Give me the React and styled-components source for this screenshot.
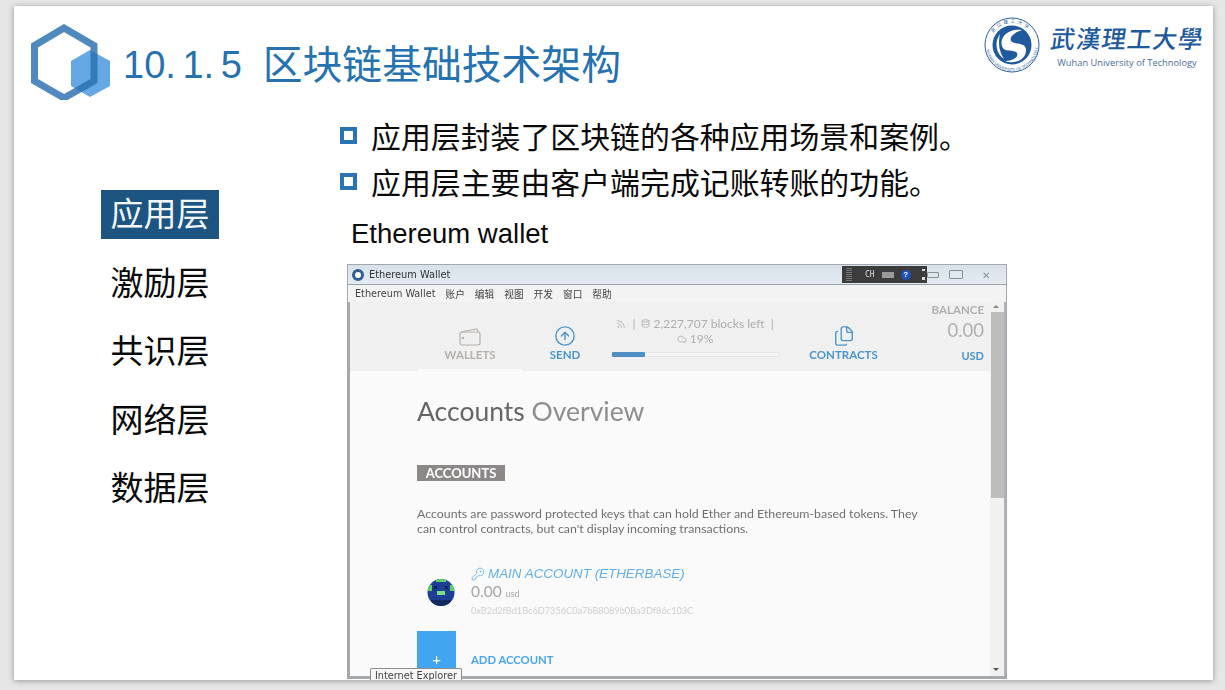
import React from 'react';
import styled, { createGlobalStyle } from 'styled-components';
import { CircleArrowUp, Cloud, Database, Files, KeyRound, Rss } from 'lucide-react';

const GlobalStyle = createGlobalStyle`
  html, body {
    margin: 0;
    padding: 0;
    height: 100%;
    background: #e6e6e6;
    overflow: hidden;
    font-family: "Liberation Sans", "Noto Sans CJK SC", sans-serif;
  }
`;

const Slide = styled.div`
  width: 1199px;
  height: 674px;
  margin: 6px 0 0 14px;
  background: #fff;
  box-shadow: 0 1px 6px rgba(0, 0, 0, 0.35);
  overflow: hidden;
`;

const Header = styled.header`
  height: 100px;
  box-sizing: border-box;
  padding: 18px 10px 0 17px;
  display: flex;
  align-items: flex-start;
`;

const Title = styled.h1`
  margin: 19px 0 0 12px;
  font-size: 38px;
  line-height: 44px;
  font-weight: 400;
  color: #2672b0;
  display: flex;
  flex: 1;
`;

const TitleNumber = styled.span`
  word-spacing: -4px;
  margin-right: 21px;
`;

const TitleText = styled.span`
  font-size: 39.8px;
`;

const Brand = styled.div`
  display: flex;
  align-items: flex-start;
  gap: 11px;
  margin-top: -7px;
`;

const BrandText = styled.div`
  display: flex;
  flex-direction: column;
  align-items: center;
  width: 152px;
`;

const BrandName = styled.div`
  font-family: "Noto Sans CJK TC", sans-serif;
  font-weight: 500;
  font-size: 24.5px;
  line-height: 30px;
  letter-spacing: 1px;
  color: #1f5a9e;
  white-space: nowrap;
  margin-top: 6px;
  transform: skewX(-8deg);
`;

const BrandEnglish = styled.div`
  font-family: "Open Sans", sans-serif;
  font-size: 9.3px;
  line-height: 14px;
  color: #4a6d9c;
  margin-top: 3px;
  white-space: nowrap;
`;

const Body = styled.main`
  display: flex;
`;

const LayerList = styled.ul`
  list-style: none;
  margin: 84px 0 0 87px;
  padding: 0;
  width: 118px;
  display: flex;
  flex-direction: column;
  gap: 19.5px;
`;

const Layer = styled.li`
  height: 49px;
  line-height: 49px;
  text-align: center;
  font-size: 33px;
  color: ${(p) => (p.$active ? '#f4f7fa' : '#0a0a0a')};
  background: ${(p) => (p.$active ? '#1c5482' : 'transparent')};
`;

const Content = styled.section`
  margin-left: 121px;
  padding-top: 6px;
`;

const Bullet = styled.div`
  display: flex;
  align-items: center;
  height: 46px;
  font-size: 29.9px;
  color: #0a0a0a;
  white-space: nowrap;
`;

const BulletMark = styled.span`
  width: 9px;
  height: 9px;
  border: 4px solid #2a74b3;
  margin-right: 14px;
  flex: none;
`;

const Caption = styled.div`
  margin: 13px 0 0 11px;
  font-size: 27.5px;
  line-height: 34px;
  color: #0a0a0a;
`;

const Win = styled.div`
  position: relative;
  margin: 13px 0 0 7px;
  width: 660px;
  height: 415px;
  box-sizing: border-box;
  background: #fafafa;
  border: 1px solid #a4a8ad;
  filter: blur(0.35px);
  font-family: Lato, "Noto Sans CJK SC", sans-serif;
`;

const TitleBar = styled.div`
  height: 20px;
  box-sizing: border-box;
  display: flex;
  align-items: center;
  gap: 5px;
  padding-left: 4px;
  background: linear-gradient(#d8e1ea, #e4ebf2);
  border-bottom: 1px solid #98a0a8;
  font-family: "DejaVu Sans", sans-serif;
  font-size: 9.8px;
  color: #333;
`;

const AppIcon = styled.span`
  width: 6px;
  height: 6px;
  border: 3px solid #2f5f8f;
  border-radius: 50%;
  background: #fff;
`;

const WindowButtons = styled.div`
  position: absolute;
  top: 1px;
  right: 16px;
  display: flex;
  align-items: center;
  gap: 10px;
  height: 17px;
  color: #8a8f96;
  font-size: 10px;
`;

const WindowMin = styled.span`
  width: 10px;
  height: 4px;
  border: 1px solid #8a8f96;
  border-radius: 1px;
`;

const WindowMax = styled.span`
  width: 12px;
  height: 7px;
  margin-right: 9px;
  border: 1px solid #8a8f96;
  border-radius: 1px;
`;

const ImeBar = styled.div`
  position: absolute;
  top: 1px;
  left: 494px;
  width: 85px;
  height: 17px;
  box-sizing: border-box;
  padding-left: 4px;
  display: flex;
  align-items: center;
  gap: 7px;
  background: #3c3c3c;
  color: #ddd;
  font-family: "DejaVu Sans Mono", monospace;
  font-size: 8px;
`;

const ImeGrip = styled.span`
  width: 6px;
  height: 13px;
  margin-right: 6px;
  background: repeating-linear-gradient(#777 0 1px, #3c3c3c 1px 2px);
`;

const ImeKeyboard = styled.span`
  width: 12px;
  height: 6px;
  background: #9a9a9a;
`;

const ImeHelp = styled.span`
  width: 10px;
  height: 10px;
  border-radius: 50%;
  background: #1f4fb8;
  color: #fff;
  font-size: 8px;
  line-height: 10px;
  text-align: center;
  font-family: "Liberation Sans", sans-serif;
  font-weight: 700;
`;

const ImeMore = styled.span`
  margin-left: 4px;
  width: 3px;
  height: 11px;
  background: linear-gradient(#ddd 0 2px, transparent 2px 8px, #ddd 8px);
`;

const MenuBar = styled.nav`
  height: 17px;
  display: flex;
  align-items: center;
  gap: 10px;
  padding-left: 7px;
  background: #f3f3f3;
  font-family: "DejaVu Sans", "Noto Sans CJK SC", sans-serif;
  font-size: 9.7px;
  color: #444;
`;

const Frame = styled.div`
  display: flex;
  height: 376px;
  box-sizing: border-box;
  overflow: hidden;
  border-left: 2px solid #a8abae;
  border-bottom: 2px solid #a8abae;
`;

const Main = styled.div`
  flex: 1;
  min-width: 0;
`;

const TopNav = styled.div`
  height: 69px;
  background: #f0f0f0;
  display: grid;
  grid-template-columns: 94px 52px 53px 32px 229px 67px 1fr;
  position: relative;
`;

const NavSpacer = styled.div``;

const NavItem = styled.div`
  display: flex;
  flex-direction: column;
  align-items: center;
  justify-content: flex-end;
  gap: 1px;
  padding-bottom: 10px;
  font-size: 11.5px;
  font-weight: 700;
  line-height: 13px;
  white-space: nowrap;
  color: ${(p) => (p.$muted ? '#b5b0ac' : '#4a95cc')};
`;

const SyncStatus = styled.div`
  position: absolute;
  left: 261px;
  top: 14px;
  width: 168px;
  display: flex;
  flex-direction: column;
  align-items: center;
  font-size: 12px;
  color: #aeaeae;
`;

const SyncLine = styled.div`
  height: 15px;
  display: flex;
  align-items: center;
  gap: 3px;
  white-space: nowrap;
`;

const Progress = styled.div`
  width: 168px;
  height: 5px;
  margin-top: 6px;
  background: #f6f6f6;
  border: 1px solid #e6e6e6;
  box-sizing: border-box;
`;

const ProgressFill = styled.div`
  height: 5px;
  margin-top: -1px;
  background: #4f8fc4;
  border-radius: 1px;
`;

const Balance = styled.div`
  position: absolute;
  right: 6px;
  top: 1px;
  display: flex;
  flex-direction: column;
  align-items: flex-end;
  color: #b0b0b0;
`;

const BalanceLabel = styled.div`
  font-size: 11.5px;
  line-height: 13px;
  font-weight: 700;
`;

const BalanceValue = styled.div`
  font-size: 18.5px;
  line-height: 28px;
`;

const BalanceUnit = styled.div`
  font-size: 11px;
  font-weight: 700;
  line-height: 14px;
  margin-top: 5px;
  color: #4a95cc;
`;

const Tab = styled.div`
  position: absolute;
  left: 68px;
  bottom: 0;
  width: 104px;
  height: 2px;
  background: #fafafa;
`;

const Page = styled.div`
  padding: 26px 0 0 67px;
`;

const PageTitle = styled.h2`
  margin: 0;
  font-size: 26.5px;
  line-height: 28px;
  font-weight: 400;
  color: #8e8e8e;
`;

const PageTitleStrong = styled.span`
  color: #666;
`;

const SectionTag = styled.div`
  display: inline-block;
  margin-top: 40px;
  width: 88px;
  height: 16px;
  line-height: 16px;
  text-align: center;
  background: #8c8888;
  color: #fff;
  font-size: 13px;
  font-weight: 700;
`;

const Intro = styled.p`
  margin: 25px 0 0;
  width: 510px;
  font-size: 12.35px;
  line-height: 15px;
  color: #6f6f6f;
`;

const Account = styled.div`
  display: flex;
  margin-top: 30px;
`;

const AccountAvatar = styled.div`
  width: 54px;
  display: flex;
  align-items: center;
  padding-left: 10px;
  box-sizing: border-box;
`;

const AccountInfo = styled.div``;

const AccountName = styled.div`
  display: flex;
  align-items: center;
  gap: 3px;
  font-family: "Liberation Sans", sans-serif;
  font-style: italic;
  font-size: 13.4px;
  line-height: 16px;
  color: #62b0ea;
`;

const AccountAmount = styled.div`
  font-size: 15.5px;
  line-height: 19px;
  color: #a5a5a5;
`;

const AccountUnit = styled.span`
  font-size: 9px;
  margin-left: 4px;
`;

const AccountAddress = styled.div`
  font-size: 9.2px;
  line-height: 14px;
  margin-top: 1px;
  color: #cfcfcf;
`;

const AddRow = styled.div`
  display: flex;
  align-items: center;
  gap: 15px;
  margin-top: 13px;
`;

const AddButton = styled.div`
  width: 39px;
  height: 56px;
  background: #42a5f0;
  color: #fff;
  font-size: 15px;
  line-height: 56px;
  text-align: center;
`;

const AddLabel = styled.div`
  font-size: 11.3px;
  font-weight: 700;
  color: #4aa6ec;
`;

const Scrollbar = styled.div`
  width: 14px;
  background: #f1f1f1;
  position: relative;
  flex: none;
  border-right: 2px solid #b0b2b5;
`;

const ScrollThumb = styled.div`
  position: absolute;
  top: 10px;
  left: 1px;
  right: 0;
  height: 186px;
  background: #bdbdbd;
`;

const ScrollArrow = styled.span`
  position: absolute;
  left: 3px;
  width: 0;
  height: 0;
  border-left: 3px solid transparent;
  border-right: 3px solid transparent;
  ${(p) => (p.$down ? 'bottom: 5px; border-top: 3px solid #555;' : 'top: 3px; border-bottom: 3px solid #888;')}
`;

const Tooltip = styled.div`
  position: absolute;
  left: 22px;
  top: 403px;
  width: 92px;
  height: 13px;
  box-sizing: border-box;
  padding-left: 4px;
  background: #f7f7f7;
  border: 1px solid #8c8c8c;
  border-bottom: none;
  border-radius: 2px 2px 0 0;
  font-family: "DejaVu Sans", sans-serif;
  font-size: 9.7px;
  line-height: 13px;
  white-space: nowrap;
  color: #444;
`;

const LogoMark = () => (
  <svg width="80" height="76" viewBox="0 0 80 76" style={{ flex: 'none' }}>
    <polygon points="59,26 79,37 79,62 59,73 40,62 40,37" fill="#65a8e3" />
    <polygon points="33,4 63,21.5 63,57 33,74 3.5,57 3.5,21.5" fill="none" stroke="#2a6fae" strokeOpacity="0.82" strokeWidth="7" />
  </svg>
);

const Seal = () => (
  <svg width="56" height="56" viewBox="0 0 56 56" style={{ flex: 'none' }}>
    <defs>
      <path id="sealTop" d="M6 28 A22 22 0 0 1 50 28" />
      <path id="sealBottom" d="M2 28 A26 26 0 0 0 54 28" />
    </defs>
    <circle cx="28" cy="28" r="27" fill="#fff" stroke="#2a5f9e" strokeWidth="1" />
    <circle cx="28" cy="28" r="19.5" fill="#1f5a9e" />
    <path d="M38 13 C26 11 15 19 18 29 C20 36 30 32 33 36 C35 40 29 44 21 44 C31 48 43 42 42 32 C41 25 30 28 27 24 C25 20 31 15 38 13 Z" fill="#fff" />
    <path d="M16 17 C10 25 12 37 20 42 C15 34 14 26 16 17 Z" fill="#fff" />
    <text fontSize="4.6" fill="#2a5f9e" fontFamily="Noto Sans CJK SC, sans-serif" letterSpacing="2.2">
      <textPath href="#sealTop" startOffset="18%">武汉理工大学</textPath>
    </text>
    <text fontSize="3.9" fill="#2a5f9e" fontFamily="Liberation Sans, sans-serif">
      <textPath href="#sealBottom" startOffset="6%">WUHAN UNIVERSITY OF TECHNOLOGY</textPath>
    </text>
  </svg>
);

const WalletIcon = () => (
  <svg width="24" height="20" viewBox="0 0 24 20" fill="none" stroke="currentColor" strokeWidth="1.2">
    <path d="M3 5 L18 2 C19 2 20 3 20 5" />
    <rect x="2" y="5" width="20" height="13" rx="2" />
    <circle cx="5" cy="11" r="0.6" fill="currentColor" />
  </svg>
);

const Identicon = () => (
  <svg width="28" height="27" viewBox="0 0 28 27">
    <defs>
      <clipPath id="avatarClip"><circle cx="14" cy="13.5" r="13.5" /></clipPath>
    </defs>
    <g clipPath="url(#avatarClip)">
      <rect width="28" height="27" fill="#1c3f94" />
      <rect x="0" y="6" width="5" height="6" fill="#5fcf6a" />
      <rect x="23" y="6" width="5" height="6" fill="#5fcf6a" />
      <rect x="9" y="0" width="10" height="3" fill="#5fcf6a" />
      <rect x="10" y="12" width="8" height="4" fill="#7be07f" />
      <rect x="7" y="7" width="3" height="3" fill="#0f2560" />
      <rect x="18" y="7" width="3" height="3" fill="#0f2560" />
      <rect x="4" y="21" width="20" height="6" fill="#12295f" />
    </g>
  </svg>
);

const layers = ['应用层', '激励层', '共识层', '网络层', '数据层'];
const menus = ['Ethereum Wallet', '账户', '编辑', '视图', '开发', '窗口', '帮助'];

const WalletWindow = () => (
  <Win>
    <TitleBar>
      <AppIcon />
      Ethereum Wallet
    </TitleBar>
    <WindowButtons>
      <WindowMin />
      <WindowMax />
      <span>✕</span>
    </WindowButtons>
    <ImeBar>
      <ImeGrip />
      CH
      <ImeKeyboard />
      <ImeHelp>?</ImeHelp>
      <ImeMore />
    </ImeBar>
    <MenuBar>
      {menus.map((m) => (
        <span key={m}>{m}</span>
      ))}
    </MenuBar>
    <Frame>
      <Main>
        <TopNav>
          <NavSpacer />
          <NavItem $muted>
            <WalletIcon />
            WALLETS
          </NavItem>
          <NavSpacer />
          <NavItem>
            <CircleArrowUp size={22} strokeWidth={1.5} />
            SEND
          </NavItem>
          <NavSpacer />
          <NavItem>
            <Files size={22} strokeWidth={1.5} />
            CONTRACTS
          </NavItem>
          <SyncStatus>
            <SyncLine>
              <Rss size={10} />
              &nbsp;|&nbsp;
              <Database size={9} />
              2,227,707 blocks left &nbsp;|
            </SyncLine>
            <SyncLine>
              <Cloud size={10} />
              19%
            </SyncLine>
            <Progress>
              <ProgressFill style={{ width: `${(33 / 168) * 100}%` }} />
            </Progress>
          </SyncStatus>
          <Balance>
            <BalanceLabel>BALANCE</BalanceLabel>
            <BalanceValue>0.00</BalanceValue>
            <BalanceUnit>USD</BalanceUnit>
          </Balance>
          <Tab />
        </TopNav>
        <Page>
          <PageTitle>
            <PageTitleStrong>Accounts</PageTitleStrong> Overview
          </PageTitle>
          <SectionTag>ACCOUNTS</SectionTag>
          <Intro>
            Accounts are password protected keys that can hold Ether and Ethereum-based tokens. They can control
            contracts, but can't display incoming transactions.
          </Intro>
          <Account>
            <AccountAvatar>
              <Identicon />
            </AccountAvatar>
            <AccountInfo>
              <AccountName>
                <KeyRound size={14} strokeWidth={1.5} />
                MAIN ACCOUNT (ETHERBASE)
              </AccountName>
              <AccountAmount>
                0.00<AccountUnit>usd</AccountUnit>
              </AccountAmount>
              <AccountAddress>0xB2d2fBd1Bc6D7356C0a7bB8089b0Ba3Df86c103C</AccountAddress>
            </AccountInfo>
          </Account>
          <AddRow>
            <AddButton>+</AddButton>
            <AddLabel>ADD ACCOUNT</AddLabel>
          </AddRow>
        </Page>
      </Main>
      <Scrollbar>
        <ScrollArrow />
        <ScrollThumb />
        <ScrollArrow $down />
      </Scrollbar>
    </Frame>
    <Tooltip>Internet Explorer</Tooltip>
  </Win>
);

export default function App() {
  return (
    <>
      <GlobalStyle />
      <Slide>
        <Header>
          <LogoMark />
          <Title>
            <TitleNumber>10. 1. 5</TitleNumber>
            <TitleText>区块链基础技术架构</TitleText>
          </Title>
          <Brand>
            <Seal />
            <BrandText>
              <BrandName>武漢理工大學</BrandName>
              <BrandEnglish>Wuhan University of Technology</BrandEnglish>
            </BrandText>
          </Brand>
        </Header>
        <Body>
          <LayerList>
            {layers.map((name, i) => (
              <Layer key={name} $active={i === 0}>
                {name}
              </Layer>
            ))}
          </LayerList>
          <Content>
            <Bullet>
              <BulletMark />
              应用层封装了区块链的各种应用场景和案例。
            </Bullet>
            <Bullet>
              <BulletMark />
              应用层主要由客户端完成记账转账的功能。
            </Bullet>
            <Caption>Ethereum wallet</Caption>
            <WalletWindow />
          </Content>
        </Body>
      </Slide>
    </>
  );
}
